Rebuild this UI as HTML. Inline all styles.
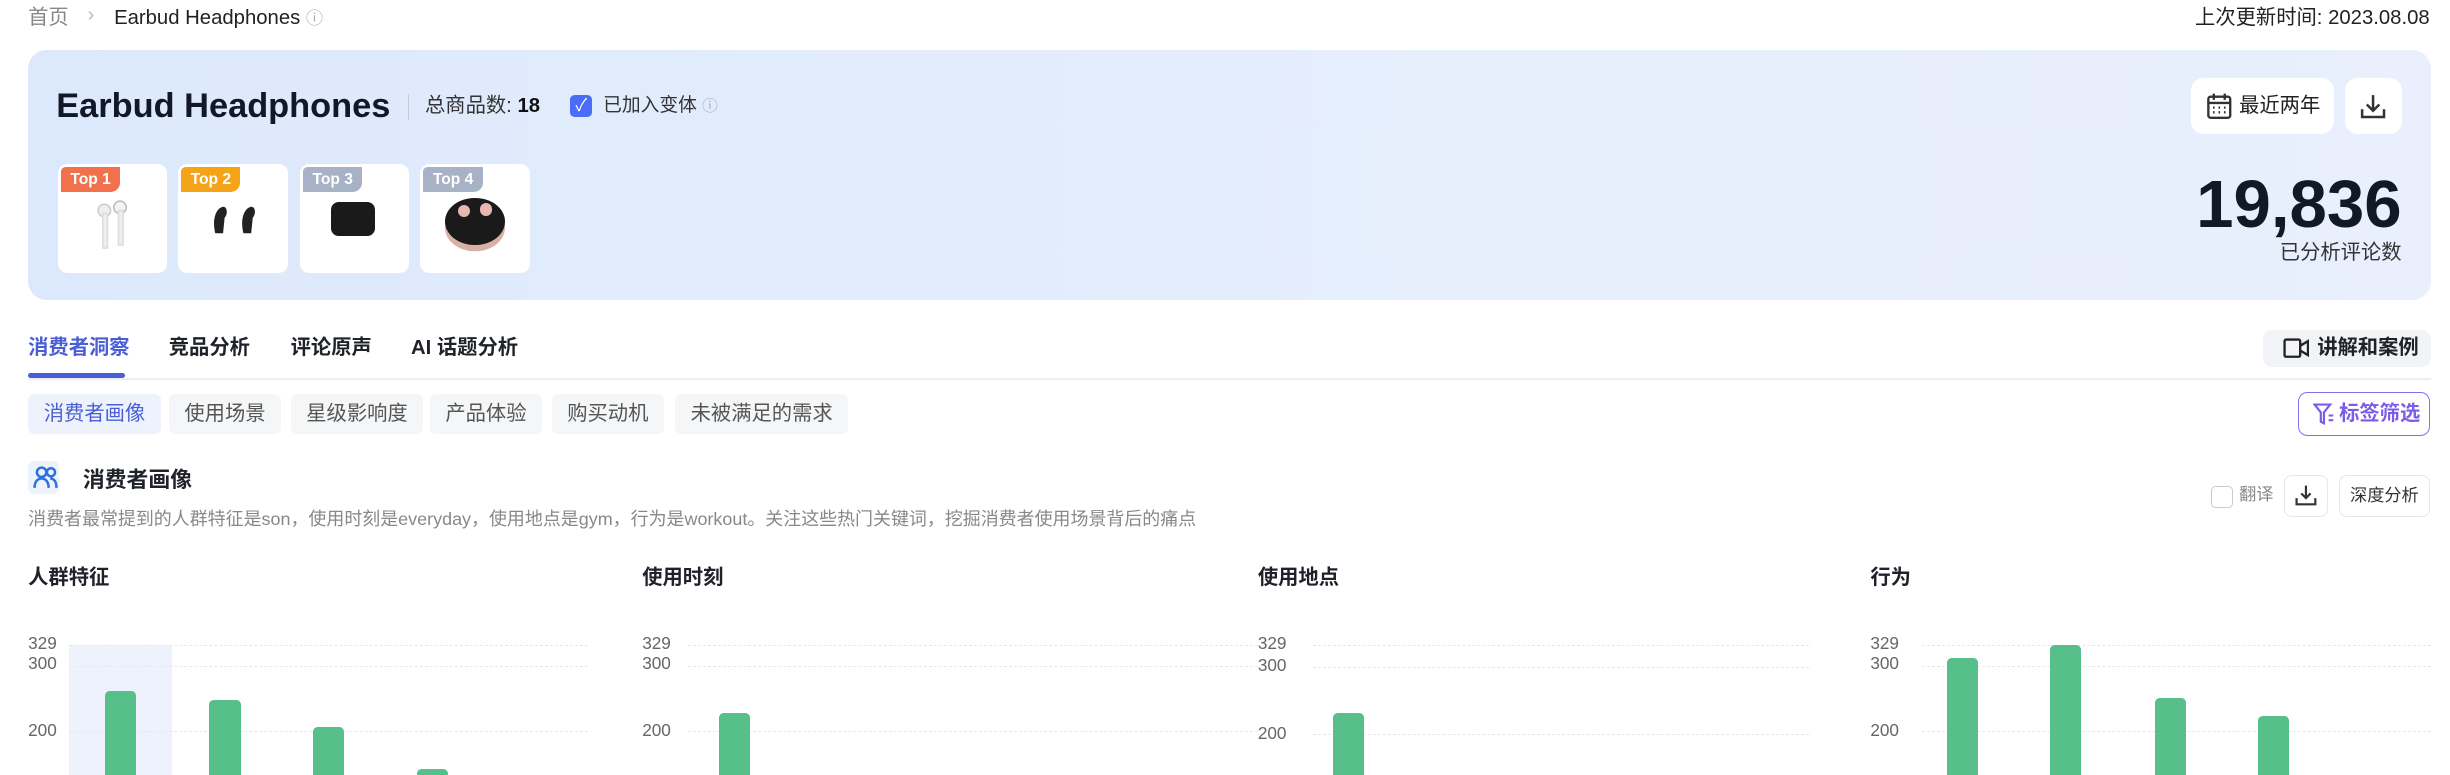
<!DOCTYPE html>
<html><head><meta charset="utf-8"><style>
*{box-sizing:border-box;margin:0;padding:0}
html,body{width:2450px;height:775px;overflow:hidden;background:#fff}
#w{zoom:1.5625;width:1568px;height:496px;position:relative;font-family:"Liberation Sans","Noto Sans CJK SC",sans-serif;color:#1f2329}
.a{position:absolute;white-space:nowrap;line-height:1.2}
.card{position:absolute;top:105px;width:70px;height:70px;background:#fff;border-radius:6px;overflow:hidden}
.badge{position:absolute;left:2px;top:2px;height:16px;padding:0 6px;font-size:10px;line-height:16px;color:#fff;font-weight:bold;border-radius:3px 0 6px 0}
.chip{position:absolute;top:252px;height:26px;line-height:26px;padding:0 10px;font-size:13px;color:#555;background:#f5f6f8;border-radius:4px}
.ct{position:absolute;top:362px;font-size:13px;font-weight:bold;line-height:1.2}
.yl{position:absolute;font-size:11px;color:#666;line-height:1.2}
.gl{position:absolute;height:0;border-top:1px dashed #e6e8ec}
.bar{position:absolute;width:20px;background:#56bf8a;border-radius:3px 3px 0 0;bottom:0}
</style></head><body><div id="w">
<div class="a" style="left:18px;top:4px;font-size:13px;color:#888">首页</div>
<div class="a" style="left:56px;top:2px;font-size:13px;color:#bbb">›</div>
<div class="a" style="left:73px;top:4px;font-size:13px;color:#222">Earbud Headphones <span style="color:#aaa;font-size:11px">ⓘ</span></div>
<div class="a" style="right:13px;top:4px;font-size:13px;color:#222">上次更新时间: 2023.08.08</div>

<div class="a" style="left:18px;top:32px;width:1538px;height:160px;border-radius:12px;background:linear-gradient(90deg,#dce9fc,#e6eefc 60%,#e9effc)"></div>
<div class="a" style="left:36px;top:55px;font-size:22px;font-weight:bold;color:#111827">Earbud Headphones</div>
<div class="a" style="left:261px;top:60px;width:1px;height:17px;background:#c8ced8"></div>
<div class="a" style="left:272px;top:60px;font-size:13px;color:#333">总商品数: <b style="color:#111">18</b></div>
<div class="a" style="left:365px;top:61px;width:14px;height:14px;border-radius:3px;background:#4a6cf7;color:#fff;font-size:11px;line-height:14px;text-align:center">✓</div>
<div class="a" style="left:386px;top:60px;font-size:12px;color:#333">已加入变体 <span style="color:#aaa;font-size:10px">ⓘ</span></div>

<div class="card" style="left:37px"><div class="badge" style="background:#f0714c">Top 1</div>
<svg style="position:absolute;left:24px;top:22px" width="24" height="36"><ellipse cx="6" cy="8" rx="4" ry="4" fill="#eee" stroke="#ccc"/><rect x="5" y="10" width="3" height="22" fill="#eee" stroke="#ddd"/><ellipse cx="16" cy="6" rx="4" ry="4" fill="#f3f3f3" stroke="#bbb"/><rect x="15" y="8" width="3" height="22" fill="#eee" stroke="#ddd"/></svg></div>
<div class="card" style="left:114px"><div class="badge" style="background:#f6a417">Top 2</div>
<svg style="position:absolute;left:20px;top:24px" width="32" height="22"><path d="M4 20 C2 12 4 4 9 3 C12 3 12 8 10 10 L9 20Z M22 20 C20 12 22 4 27 3 C30 3 30 8 28 10 L27 20Z" fill="#222"/></svg></div>
<div class="card" style="left:192px"><div class="badge" style="background:#a8b2c6">Top 3</div>
<div style="position:absolute;left:20px;top:24px;width:28px;height:22px;background:#1a1a1a;border-radius:5px"></div></div>
<div class="card" style="left:269px"><div class="badge" style="background:#a8b2c6">Top 4</div>
<div style="position:absolute;left:16px;top:22px;width:38px;height:30px;background:#1a1a1a;border-radius:50%;box-shadow:0 4px 0 #d9b0a6"></div>
<div style="position:absolute;left:24px;top:26px;width:8px;height:8px;background:#e8b8b0;border-radius:50%"></div>
<div style="position:absolute;left:38px;top:25px;width:8px;height:8px;background:#e8b8b0;border-radius:50%"></div></div>

<div class="a" style="left:1402px;top:50px;width:92px;height:36px;background:#fff;border-radius:8px"></div>
<svg class="a" style="left:1412px;top:59px" width="17" height="18" viewBox="0 0 17 18"><rect x="1.5" y="3" width="14" height="13.5" rx="1.5" fill="none" stroke="#333" stroke-width="1.5"/><path d="M1.5 7h14M5 1v4M12 1v4" stroke="#333" stroke-width="1.5"/><path d="M4.5 10h1M8 10h1M11.5 10h1M4.5 13h1M8 13h1M11.5 13h1" stroke="#333" stroke-width="1.5"/></svg>
<div class="a" style="left:1433px;top:60px;font-size:13px;color:#222">最近两年</div>
<div class="a" style="left:1501px;top:50px;width:36px;height:36px;background:#fff;border-radius:8px"></div>
<svg class="a" style="left:1510px;top:59px" width="18" height="18" viewBox="0 0 18 18"><path d="M9 2v10M5 8l4 4 4-4M2 11v5h14v-5" fill="none" stroke="#333" stroke-width="1.6"/></svg>
<div class="a" style="right:31px;top:105px;font-size:43px;font-weight:bold;color:#111827;line-height:52px">19,836</div>
<div class="a" style="right:31px;top:154px;font-size:13px;color:#333">已分析评论数</div>

<div class="a" style="left:18px;top:215px;font-size:13px;font-weight:bold;color:#4a5fd6">消费者洞察</div>
<div class="a" style="left:108px;top:215px;font-size:13px;font-weight:bold">竞品分析</div>
<div class="a" style="left:186px;top:215px;font-size:13px;font-weight:bold">评论原声</div>
<div class="a" style="left:263px;top:215px;font-size:13px;font-weight:bold">AI 话题分析</div>
<div class="a" style="left:18px;top:242px;width:1538px;height:1px;background:#eceef2"></div>
<div class="a" style="left:18px;top:239px;width:62px;height:3px;background:#4a5fd6;border-radius:2px"></div>
<div class="a" style="left:1448px;top:211px;width:108px;height:24px;background:#f1f3f7;border-radius:6px"></div>
<svg class="a" style="left:1461px;top:216px" width="17" height="13" viewBox="0 0 17 13"><rect x="1" y="1" width="10" height="11" rx="1" fill="none" stroke="#222" stroke-width="1.5"/><path d="M11 5l5-3v9l-5-3" fill="none" stroke="#222" stroke-width="1.5"/></svg>
<div class="a" style="left:1483px;top:215px;font-size:13px;font-weight:bold">讲解和案例</div>

<div class="chip" style="left:18px;color:#4a5fd6;background:#eef2fc">消费者画像</div>
<div class="chip" style="left:108px">使用场景</div>
<div class="chip" style="left:186px">星级影响度</div>
<div class="chip" style="left:275px">产品体验</div>
<div class="chip" style="left:353px">购买动机</div>
<div class="chip" style="left:432px">未被满足的需求</div>
<div class="a" style="left:1471px;top:251px;width:84px;height:28px;border:1px solid #8b6cf0;border-radius:6px"></div>
<svg class="a" style="left:1480px;top:258px" width="14" height="15" viewBox="0 0 14 15"><path d="M1 1h10l-4 5v7l-2-1V6z" fill="none" stroke="#7c5ce6" stroke-width="1.4"/><path d="M10 8h3M10 11h3" stroke="#7c5ce6" stroke-width="1.3"/></svg>
<div class="a" style="left:1497px;top:257px;font-size:13px;font-weight:bold;color:#7c5ce6">标签筛选</div>

<div class="a" style="left:18px;top:295px;width:20px;height:21px;background:#edf3fd;border-radius:4px"></div>
<svg class="a" style="left:21px;top:298px" width="16" height="15" viewBox="0 0 16 15"><circle cx="5.5" cy="4" r="3" fill="none" stroke="#2f6fe0" stroke-width="1.6"/><circle cx="11.5" cy="4" r="2.6" fill="none" stroke="#2f6fe0" stroke-width="1.6"/><path d="M1 14c0-4 2-6 4.5-6s4.5 2 4.5 6M11 8c2.5 0 4 2 4 6" fill="none" stroke="#2f6fe0" stroke-width="1.6"/></svg>
<div class="a" style="left:53px;top:299px;font-size:14px;font-weight:bold">消费者画像</div>
<div class="a" style="left:18px;top:326px;font-size:11.5px;color:#888">消费者最常提到的人群特征是son，使用时刻是everyday，使用地点是gym，行为是workout。关注这些热门关键词，挖掘消费者使用场景背后的痛点</div>
<div class="a" style="left:1415px;top:311px;width:14px;height:14px;border:1px solid #ccc;border-radius:3px"></div>
<div class="a" style="left:1433px;top:310px;font-size:11px;color:#888">翻译</div>
<div class="a" style="left:1462px;top:304px;width:28px;height:27px;border:1px solid #e6e8ec;border-radius:5px"></div>
<svg class="a" style="left:1469px;top:310px" width="14" height="14" viewBox="0 0 14 14"><path d="M7 1v8M4 6l3 3 3-3M1 9v4h12V9" fill="none" stroke="#333" stroke-width="1.4"/></svg>
<div class="a" style="left:1497px;top:304px;width:58px;height:27px;border:1px solid #e6e8ec;border-radius:5px;font-size:11px;line-height:25px;text-align:center;color:#333">深度分析</div>

<div class="ct" style="left:18px">人群特征</div>
<div class="ct" style="left:411px">使用时刻</div>
<div class="ct" style="left:805px">使用地点</div>
<div class="ct" style="left:1197px">行为</div>

<div class="a" style="left:44px;top:413px;width:66px;height:83px;background:#edf2fd"></div>
<div class="yl" style="left:18px;top:405px">329</div><div class="yl" style="left:18px;top:418px">300</div><div class="yl" style="left:18px;top:461px">200</div>
<div class="gl" style="left:44px;width:332px;top:413px"></div><div class="gl" style="left:44px;width:332px;top:426px"></div><div class="gl" style="left:44px;width:332px;top:468px"></div>
<div class="bar" style="left:67px;top:442px"></div><div class="bar" style="left:134px;top:448px"></div><div class="bar" style="left:200px;top:465px"></div><div class="bar" style="left:267px;top:492px"></div>
<div class="yl" style="left:411px;top:405px">329</div><div class="yl" style="left:411px;top:418px">300</div><div class="yl" style="left:411px;top:461px">200</div>
<div class="gl" style="left:440px;width:365px;top:413px"></div><div class="gl" style="left:440px;width:365px;top:426px"></div><div class="gl" style="left:440px;width:365px;top:468px"></div>
<div class="bar" style="left:460px;top:456px"></div>
<div class="yl" style="left:805px;top:405px">329</div><div class="yl" style="left:805px;top:419px">300</div><div class="yl" style="left:805px;top:463px">200</div>
<div class="gl" style="left:840px;width:318px;top:413px"></div><div class="gl" style="left:840px;width:318px;top:427px"></div><div class="gl" style="left:840px;width:318px;top:470px"></div>
<div class="bar" style="left:853px;top:456px"></div>
<div class="yl" style="left:1197px;top:405px">329</div><div class="yl" style="left:1197px;top:418px">300</div><div class="yl" style="left:1197px;top:461px">200</div>
<div class="gl" style="left:1230px;width:326px;top:413px"></div><div class="gl" style="left:1230px;width:326px;top:426px"></div><div class="gl" style="left:1230px;width:326px;top:468px"></div>
<div class="bar" style="left:1246px;top:421px"></div><div class="bar" style="left:1312px;top:413px"></div><div class="bar" style="left:1379px;top:447px"></div><div class="bar" style="left:1445px;top:458px"></div>
</div></body></html>
